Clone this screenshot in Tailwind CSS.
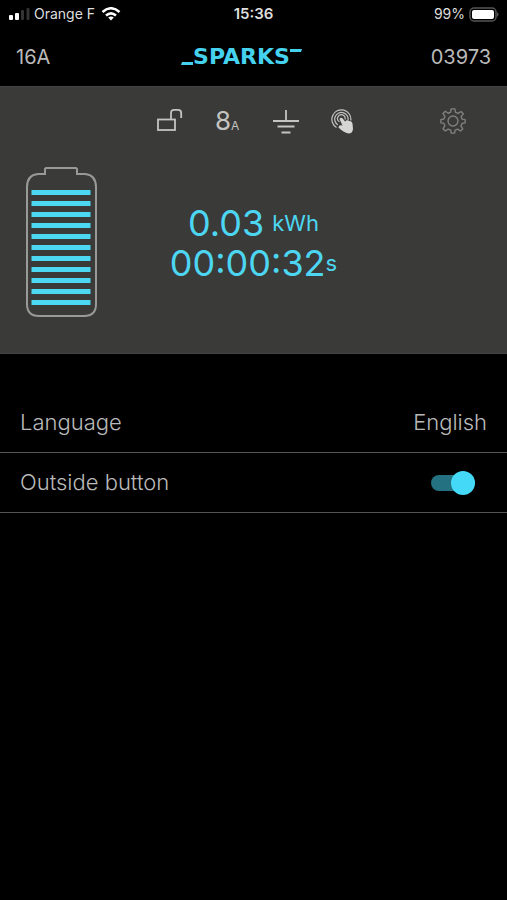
<!DOCTYPE html>
<html lang="en">
<head>
<meta charset="utf-8">
<meta name="viewport" content="width=device-width, initial-scale=1">
<title>Sparks charger</title>
<script src="https://cdn.jsdelivr.net/npm/@tailwindcss/browser@4"></script>
</head>
<body class="min-h-screen bg-black font-['Inter','Liberation_Sans',sans-serif] text-[#bababa]">
<div class="grid h-7 grid-cols-[1fr_auto_1fr] items-center px-2 text-sm text-[#dedede]">
  <div class="flex items-center gap-1">
    <svg class="h-3 w-[22px]" viewBox="0 0 22 12" aria-label="Signal"><rect x="1" y="7" width="4" height="5" rx="1" fill="#fff"/><rect x="7" y="5" width="4" height="7" rx="1" fill="#fff"/><rect x="13" y="2" width="3" height="10" rx="1" fill="#333"/><rect x="18.500" y="0" width="3" height="12" rx="1" fill="#333"/></svg>
    <span>Orange F</span>
    <svg class="ml-0.5 h-[14px] w-5" viewBox="0 0 20 14" fill="none" stroke="#fff" stroke-width="2.500" aria-label="Wi-Fi"><path d="M1.500 5Q10-2.500 18.500 5M5 8.500Q10 4.200 15 8.500"/><path d="M7.200 10.500Q10 8.300 12.800 10.500L10 13.500Z" fill="#fff" stroke="none"/></svg>
  </div>
  <time class="text-[15px] font-semibold">15:36</time>
  <div class="flex items-center justify-end gap-1">
    <span>99%</span>
    <svg class="h-[15px] w-[30px]" viewBox="0 0 30 15" aria-label="Battery"><rect x="1" y="1" width="26" height="13" rx="4" fill="none" stroke="#555" stroke-width="1.500"/><rect x="3" y="3" width="22" height="9" rx="2" fill="#fff"/><path d="M28 5Q31 7.500 28 10Z" fill="#555"/></svg>
  </div>
</div>

<header class="grid h-[58px] grid-cols-[1fr_auto_1fr] items-center px-4 text-xl">
  <span>16A</span>
  <h1 class="mr-6 flex items-center font-['DejaVu_Sans','Liberation_Sans',sans-serif] font-bold text-[#45d2ef]">
    <svg class="h-4 w-3" viewBox="0 0 12 16" aria-hidden="true"><path d="M1 13H12V16H0Z" fill="#45d2ef"/></svg>
    <span class="text-[22px]">SPARKS</span>
    <svg class="h-4 w-3" viewBox="0 0 12 16" aria-hidden="true"><path d="M0 0H12L11 3H0Z" fill="#45d2ef"/></svg>
  </h1>
  <span class="text-right">03973</span>
</header>

<main>
  <section class="h-[268px] border-y border-[#444442] bg-[#3a3a38]">
    <div class="flex items-center pt-5 pr-10 pl-[157px]">
      <div class="flex flex-1 items-center gap-8">
        <svg class="h-7 w-[26px]" viewBox="0 0 26 28" fill="none" stroke="#c4c4c2" stroke-width="1.800" aria-label="Unlocked"><rect x="1" y="12.500" width="17" height="10.500"/><path d="M14 12.500V6Q14 2.800 17.200 2.800H21Q24.200 2.800 24.200 6V11"/></svg>
        <span class="flex w-[26px] items-baseline text-[#c4c4c2]"><span class="text-[26px] leading-7">8</span><span class="text-xs leading-4">A</span></span>
        <svg class="h-7 w-[26px]" viewBox="0 0 26 28" fill="none" stroke="#c4c4c2" stroke-width="1.800" aria-label="Ground"><path d="M13 3V14M0 14H26M4.500 19.500H21.500M8.500 25.500H17.500"/></svg>
        <svg class="h-7 w-[26px]" viewBox="2 0 26 28" fill="none" stroke="#c4c4c2" stroke-width="1.200" aria-label="Touch button"><path d="M7.500 20.500A9.500 9.500 0 1 1 21.800 13.500M8.800 17.800A6.700 6.700 0 1 1 19 13.500M10.500 14.800A3.800 3.800 0 1 1 16 12.500"/><path d="M10.500 12Q11.500 10 13.700 11.500L16 14.500Q18 12.500 20 14Q23 13.500 23.500 16.500L24 22Q23.500 26.500 19.500 26.500Q14.500 25.500 9.500 20.500Q9.500 17.500 13.500 18.500Z" fill="#d5d5d3" stroke="none"/></svg>
      </div>
      <button type="button" aria-label="Settings">
        <svg class="h-7 w-7" viewBox="-1 -1 30 30" fill="none" stroke="#80807e" stroke-width="1.500" stroke-linejoin="round"><circle cx="14" cy="14" r="5.300"/><path d="M12 1H16L16.700 4.700L19.500 5.900L22.600 3.800L25 6.300L22.700 9.300L23.700 12L27 12.500V16L23.700 16.700L22.500 19.400L24.500 22.500L22 24.700L19 22.700L16.300 23.800L15.700 27H12.200L11.500 23.800L8.800 22.700L5.700 24.700L3.300 22.200L5.300 19.200L4.200 16.500L1 16V12.500L4.200 11.800L5.400 9L3.300 6L5.800 3.500L8.800 5.700L11.500 4.600Z"/></svg>
      </button>
    </div>
    <div class="grid grid-cols-[71px_1fr_71px] items-start px-[26px] pt-8">
      <svg class="h-[150px] w-[71px]" viewBox="0 0 71 150" fill="none" aria-label="Charge level">
        <path d="M19 2V7H12Q1 8 1 20V137Q1 149 13 149H58Q70 149 70 137V20Q70 8 59 7H51V2L50 1H20Z" stroke="#999997" stroke-width="2"/>
        <path d="M5.500 25.500H64.500M5.500 36.500H64.500M5.500 47.500H64.500M5.500 58.500H64.500M5.500 69.500H64.500M5.500 80.500H64.500M5.500 91.500H64.500M5.500 102.500H64.500M5.500 113.500H64.500M5.500 124.500H64.500M5.500 135.500H64.500" stroke="#4cd7f3" stroke-width="5"/>
      </svg>
      <div class="flex flex-col items-center pt-9 leading-10 text-[#4dd6f2]">
        <p class="flex items-center gap-2"><span class="text-4xl/10">0.03</span><span class="text-[22px]">kWh</span></p>
        <p class="flex items-center"><span class="text-4xl/10">00:00:32</span><span class="text-[22px]">s</span></p>
      </div>
    </div>
  </section>

  <section class="pt-[39px] text-[22px] font-light" aria-label="Preferences">
    <div class="flex h-[60px] items-center justify-between border-b border-[#555555] px-5">
      <span>Language</span>
      <button type="button">English</button>
    </div>
    <div class="flex h-[60px] items-center justify-between border-b border-[#555555] pr-8 pl-5">
      <label for="outside">Outside button</label>
      <span class="relative flex h-6 w-11 items-center">
        <input id="outside" type="checkbox" role="switch" checked class="peer h-4 w-11 appearance-none rounded-full bg-[#4a4a4a] checked:bg-[#237181]">
        <span class="pointer-events-none absolute left-0 size-6 rounded-full bg-[#999999] peer-checked:right-0 peer-checked:left-auto peer-checked:bg-[#45d9f8]"></span>
      </span>
    </div>
  </section>
</main>
</body>
</html>
